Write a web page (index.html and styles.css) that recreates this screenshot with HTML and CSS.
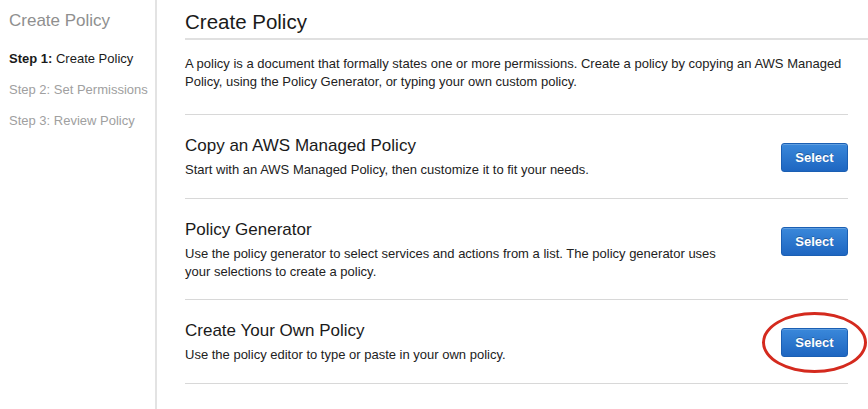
FILE: index.html
```html
<!DOCTYPE html>
<html>
<head>
<meta charset="utf-8">
<link rel="stylesheet" href="styles.css">
</head>
<body>
<div class="page">
  <aside class="sidebar">
    <div class="side-title">Create Policy</div>
    <ul class="steps">
      <li class="step active"><b>Step 1:</b> Create Policy</li>
      <li class="step">Step 2: Set Permissions</li>
      <li class="step">Step 3: Review Policy</li>
    </ul>
  </aside>
  <main class="main">
    <h1 class="page-title">Create Policy</h1>
    <p class="intro">A policy is a document that formally states one or more permissions. Create a policy by copying an AWS Managed Policy, using the Policy Generator, or typing your own custom policy.</p>
    <div class="options">
      <div class="option">
        <div class="option-text">
          <h2 class="option-title">Copy an AWS Managed Policy</h2>
          <p class="option-desc">Start with an AWS Managed Policy, then customize it to fit your needs.</p>
        </div>
        <div class="btn-wrap"><button class="btn">Select</button></div>
      </div>
      <div class="option tall">
        <div class="option-text">
          <h2 class="option-title">Policy Generator</h2>
          <p class="option-desc">Use the policy generator to select services and actions from a list. The policy generator uses your selections to create a policy.</p>
        </div>
        <div class="btn-wrap"><button class="btn">Select</button></div>
      </div>
      <div class="option last">
        <div class="option-text">
          <h2 class="option-title">Create Your Own Policy</h2>
          <p class="option-desc">Use the policy editor to type or paste in your own policy.</p>
        </div>
        <div class="btn-wrap"><button class="btn">Select</button><span class="highlight"></span></div>
      </div>
    </div>
  </main>
</div>
</body>
</html>
```

FILE: styles.css
```css
html, body {
  margin: 0;
  padding: 0;
  background: #fff;
}
body {
  font-family: "Liberation Sans", Arial, Helvetica, sans-serif;
  color: #333;
}
.page {
  display: flex;
  min-height: 409px;
  height: 100vh;
}
.sidebar {
  width: 146px;
  padding-left: 9px;
  border-right: 2px solid #e3e3e3;
  flex-shrink: 0;
}
.side-title {
  margin-top: 10px;
  font-size: 17px;
  line-height: 22px;
  color: #8f8f8f;
}
.steps {
  list-style: none;
  margin: 18px 0 0;
  padding: 0;
}
.step {
  font-size: 13px;
  line-height: 18px;
  color: #a0a0a0;
  margin-bottom: 13px;
}
.step.active {
  color: #1a1a1a;
}
.main {
  flex: 1;
  padding-left: 28px;
}
.page-title {
  margin: 0;
  padding: 10px 0 4px;
  font-size: 20.5px;
  line-height: 24px;
  font-weight: normal;
  color: #1a1a1a;
  border-bottom: 2px solid #e0e0e0;
}
.intro {
  margin: 15px 8px 0 0;
  font-size: 13px;
  line-height: 18px;
  color: #222;
}
.options {
  margin: 23px 20px 0 0;
}
.option {
  display: flex;
  border-top: 1px solid #d8d8d8;
  padding: 20px 0 19px;
}
.option.tall {
  padding-bottom: 18px;
}
.option.last {
  border-bottom: 1px solid #d8d8d8;
}
.option-text {
  width: 556px;
  flex-shrink: 0;
}
.option-title {
  margin: 0;
  font-size: 17px;
  line-height: 22px;
  font-weight: normal;
  color: #1a1a1a;
}
.option-desc {
  margin: 4px 0 0;
  font-size: 13px;
  line-height: 18px;
  color: #222;
}
.btn-wrap {
  margin-left: auto;
  margin-top: 8px;
  position: relative;
  height: 29px;
}
.btn {
  display: block;
  width: 67px;
  height: 29px;
  padding: 0;
  border: 1px solid #1b5fb3;
  border-radius: 3px;
  background: linear-gradient(#3a88da, #1e66c1);
  color: #fff;
  font-family: "Liberation Sans", Arial, Helvetica, sans-serif;
  font-size: 13px;
  font-weight: bold;
  text-shadow: 0 -1px 0 rgba(0, 0, 0, 0.25);
  box-shadow: inset 0 1px 0 rgba(255, 255, 255, 0.2);
}
.highlight {
  position: absolute;
  left: -19px;
  top: -16px;
  width: 105px;
  height: 61px;
  box-sizing: border-box;
  border: 3px solid #d42a1e;
  border-radius: 50%;
  pointer-events: none;
}
```
